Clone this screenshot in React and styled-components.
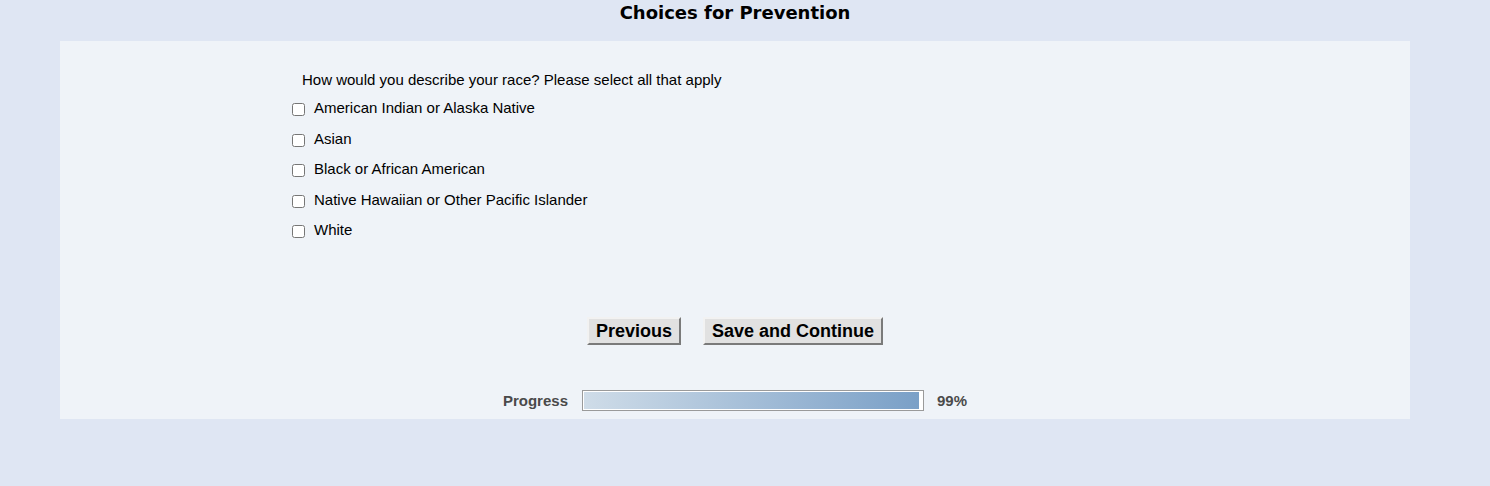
import React from "react";
import styled, { createGlobalStyle } from "styled-components";

const Global = createGlobalStyle`
  html, body { margin: 0; padding: 0; background: #dfe6f3; }
  body { font-family: "Liberation Sans", Arial, sans-serif; color: #000; }
`;

const Page = styled.div`
  width: 1490px;
  height: 486px;
  background: #dfe6f3;
  overflow: hidden;
`;

const Header = styled.h1`
  margin: 0 80px 0 60px;
  height: 41px;
  box-sizing: border-box;
  text-align: center;
  font-family: Tahoma, "DejaVu Sans", sans-serif;
  font-weight: bold;
  font-size: 18px;
  line-height: 26px;
  color: #000;
`;

const Panel = styled.main`
  margin: 0 80px 0 60px;
  height: 378px;
  background: #eff3f8;
  display: flex;
  flex-direction: column;
  align-items: center;
  box-sizing: border-box;
  padding-top: 29px;
`;

const Question = styled.fieldset`
  border: 0;
  margin: 0;
  padding: 0;
  width: 886px;
  font-size: 15px;
`;

const Legend = styled.div`
  padding-left: 10px;
  line-height: 20px;
  height: 20px;
  margin-bottom: 3px;
`;

const Option = styled.label`
  display: flex;
  align-items: center;
  height: 30.5px;
  line-height: 20px;
  cursor: pointer;
`;

const Box = styled.input.attrs({ type: "checkbox" })`
  width: 13px;
  height: 13px;
  margin: 3px 9px 0 0;
`;

const Buttons = styled.div`
  display: flex;
  gap: 22px;
  margin-top: 71px;
`;

const Button = styled.button`
  font-family: "Liberation Sans", Arial, sans-serif;
  font-weight: bold;
  font-size: 18px;
  height: 28px;
  padding: 0 7px;
  background: #e1e1e1;
  color: #000;
  border: 2px solid;
  border-color: #f2f2f2 #7a7a7a #7a7a7a #f2f2f2;
  box-sizing: border-box;
  line-height: 22px;
  cursor: pointer;
`;

const ProgressRow = styled.div`
  display: flex;
  align-items: center;
  margin-top: 45px;
  font-weight: bold;
  font-size: 15px;
  color: #4a4a4a;
  gap: 14px;
`;

const Track = styled.div`
  width: 342px;
  height: 21px;
  box-sizing: border-box;
  border: 1px solid #9a9a9a;
  background: #fff;
  padding: 1px;
`;

const Fill = styled.div`
  height: 100%;
  background: linear-gradient(to right, #cfdce8, #7aa0c7);
`;

const Pct = styled.span`
  margin-left: -1px;
`;

const options = [
  "American Indian or Alaska Native",
  "Asian",
  "Black or African American",
  "Native Hawaiian or Other Pacific Islander",
  "White",
];

export default function App() {
  const pct = 99;
  return (
    <Page>
      <Global />
      <Header>Choices for Prevention</Header>
      <Panel>
        <Question>
          <Legend>How would you describe your race? Please select all that apply</Legend>
          {options.map((o) => (
            <Option key={o}>
              <Box />
              {o}
            </Option>
          ))}
        </Question>
        <Buttons>
          <Button>Previous</Button>
          <Button>Save and Continue</Button>
        </Buttons>
        <ProgressRow>
          <span>Progress</span>
          <Track>
            <Fill style={{ width: `${pct}%` }} />
          </Track>
          <Pct>{pct}%</Pct>
        </ProgressRow>
      </Panel>
    </Page>
  );
}
